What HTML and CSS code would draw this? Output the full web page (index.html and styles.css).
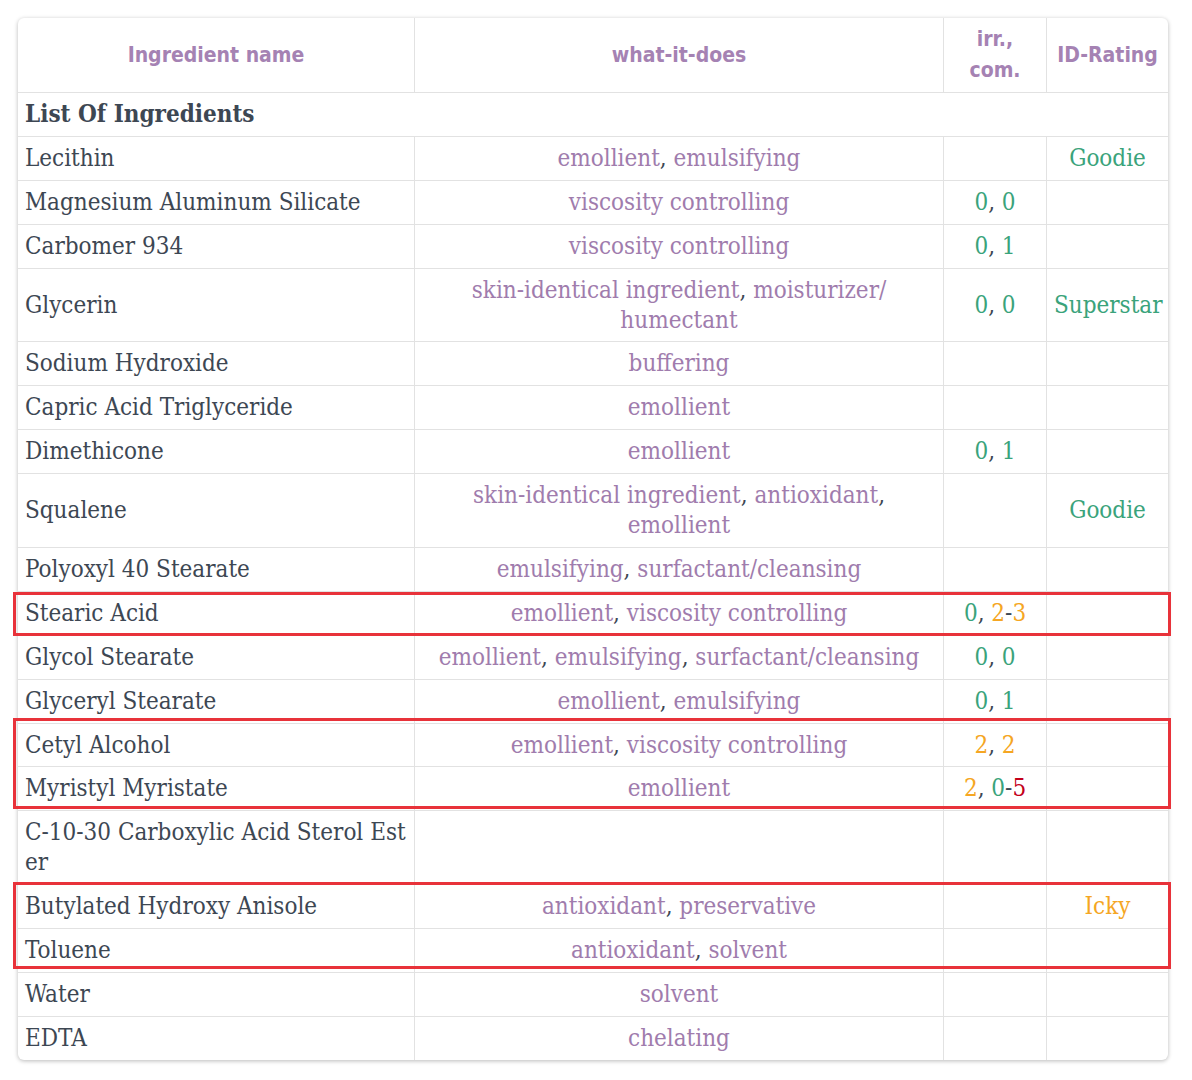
FILE: index.html
```html
<!DOCTYPE html>
<html>
<head>
<meta charset="utf-8">
<link rel="stylesheet" href="styles.css">
</head>
<body>
<div class="page">
  <div class="card">
    <table class="ing">
      <colgroup>
        <col class="c1"><col class="c2"><col class="c3"><col class="c4">
      </colgroup>
      <thead>
        <tr>
          <th>Ingredient name</th>
          <th>what-it-does</th>
          <th>irr., com.</th>
          <th class="last">ID-Rating</th>
        </tr>
      </thead>
      <tbody>
        <tr><td colspan="4" class="group">List Of Ingredients</td></tr>
        <tr><td>Lecithin</td><td class="fn"><span class="p">emollient</span>, <span class="p">emulsifying</span></td><td class="ic"></td><td class="rt"><span class="g">Goodie</span></td></tr>
        <tr><td>Magnesium Aluminum Silicate</td><td class="fn"><span class="p">viscosity controlling</span></td><td class="ic"><span class="g">0</span>, <span class="g">0</span></td><td class="rt"></td></tr>
        <tr><td>Carbomer 934</td><td class="fn"><span class="p">viscosity controlling</span></td><td class="ic"><span class="g">0</span>, <span class="g">1</span></td><td class="rt"></td></tr>
        <tr><td>Glycerin</td><td class="fn"><span class="p">skin-identical ingredient</span>, <span class="p">moisturizer/</span> <span class="p">humectant</span></td><td class="ic"><span class="g">0</span>, <span class="g">0</span></td><td class="rt"><span class="g">Superstar</span></td></tr>
        <tr><td>Sodium Hydroxide</td><td class="fn"><span class="p">buffering</span></td><td class="ic"></td><td class="rt"></td></tr>
        <tr><td>Capric Acid Triglyceride</td><td class="fn"><span class="p">emollient</span></td><td class="ic"></td><td class="rt"></td></tr>
        <tr><td>Dimethicone</td><td class="fn"><span class="p">emollient</span></td><td class="ic"><span class="g">0</span>, <span class="g">1</span></td><td class="rt"></td></tr>
        <tr><td>Squalene</td><td class="fn"><span class="p">skin-identical ingredient</span>, <span class="p">antioxidant</span>, <span class="p">emollient</span></td><td class="ic"></td><td class="rt"><span class="g">Goodie</span></td></tr>
        <tr><td>Polyoxyl 40 Stearate</td><td class="fn"><span class="p">emulsifying</span>, <span class="p">surfactant/cleansing</span></td><td class="ic"></td><td class="rt"></td></tr>
        <tr><td>Stearic Acid</td><td class="fn"><span class="p">emollient</span>, <span class="p">viscosity controlling</span></td><td class="ic"><span class="g">0</span>, <span class="o">2</span>-<span class="o">3</span></td><td class="rt"></td></tr>
        <tr><td>Glycol Stearate</td><td class="fn"><span class="p">emollient</span>, <span class="p">emulsifying</span>, <span class="p">surfactant/cleansing</span></td><td class="ic"><span class="g">0</span>, <span class="g">0</span></td><td class="rt"></td></tr>
        <tr><td>Glyceryl Stearate</td><td class="fn"><span class="p">emollient</span>, <span class="p">emulsifying</span></td><td class="ic"><span class="g">0</span>, <span class="g">1</span></td><td class="rt"></td></tr>
        <tr><td>Cetyl Alcohol</td><td class="fn"><span class="p">emollient</span>, <span class="p">viscosity controlling</span></td><td class="ic"><span class="o">2</span>, <span class="o">2</span></td><td class="rt"></td></tr>
        <tr><td>Myristyl Myristate</td><td class="fn"><span class="p">emollient</span></td><td class="ic"><span class="o">2</span>, <span class="g">0</span>-<span class="r">5</span></td><td class="rt"></td></tr>
        <tr><td class="brk">C-10-30 Carboxylic Acid Sterol Ester</td><td class="fn"></td><td class="ic"></td><td class="rt"></td></tr>
        <tr><td>Butylated Hydroxy Anisole</td><td class="fn"><span class="p">antioxidant</span>, <span class="p">preservative</span></td><td class="ic"></td><td class="rt"><span class="o">Icky</span></td></tr>
        <tr><td>Toluene</td><td class="fn"><span class="p">antioxidant</span>, <span class="p">solvent</span></td><td class="ic"></td><td class="rt"></td></tr>
        <tr><td>Water</td><td class="fn"><span class="p">solvent</span></td><td class="ic"></td><td class="rt"></td></tr>
        <tr class="lastrow"><td>EDTA</td><td class="fn"><span class="p">chelating</span></td><td class="ic"></td><td class="rt"></td></tr>
      </tbody>
    </table>
  </div>
  <div class="mark mark-1"></div>
  <div class="mark mark-2"></div>
  <div class="mark mark-3"></div>
</div>
</body>
</html>
```
FILE: styles.css
```css
html, body {
  margin: 0;
  padding: 0;
  background: #ffffff;
}
.page {
  position: relative;
  padding: 18px;
  width: 1150px;
}
.card {
  width: 1150px;
  border-radius: 6px;
  overflow: hidden;
  box-shadow: 0 1px 4px rgba(0, 0, 0, 0.28);
  background: #fff;
}
.ing {
  width: 1150px;
  table-layout: fixed;
  border-collapse: separate;
  border-spacing: 0;
  font-family: "DejaVu Serif", "Liberation Serif", serif;
  font-stretch: condensed;
  font-size: 24px;
  line-height: 30px;
  color: #3d4753;
}
.c1 { width: 397px; }
.c2 { width: 529px; }
.c3 { width: 103px; }
.c4 { width: 121px; }
.ing th {
  font-family: "DejaVu Sans", sans-serif;
  font-stretch: condensed;
  font-weight: bold;
  font-size: 21px;
  line-height: 31px;
  color: #a582b3;
  text-align: center;
  vertical-align: middle;
  height: 75px;
  padding: 0 6px;
  box-sizing: border-box;
  border-right: 1px solid #e2e2e2;
  border-bottom: 1px solid #e2e2e2;
}
.ing th.last { border-right: none; }
.ing td {
  padding: 6px 7px 6.9px 7px;
  border-bottom: 1px solid #e2e2e2;
  border-right: 1px solid #e2e2e2;
  vertical-align: middle;
}
.ing td.rt { border-right: none; }
.ing td.group {
  font-weight: bold;
  border-right: none;
}
.ing tr.lastrow td { border-bottom: none; }
.fn, .ic, .rt { text-align: center; }
.brk { word-break: break-all; }
.p { color: #a07cad; }
.g { color: #3aa37b; }
.o { color: #f5a623; }
.r { color: #c3001a; }
.mark {
  position: absolute;
  left: 13px;
  width: 1158px;
  border: 3px solid #e8323a;
  box-sizing: border-box;
  pointer-events: none;
}
.mark-1 { top: 592px; height: 44px; }
.mark-2 { top: 718px; height: 91px; }
.mark-3 { top: 882px; height: 87px; }
```
